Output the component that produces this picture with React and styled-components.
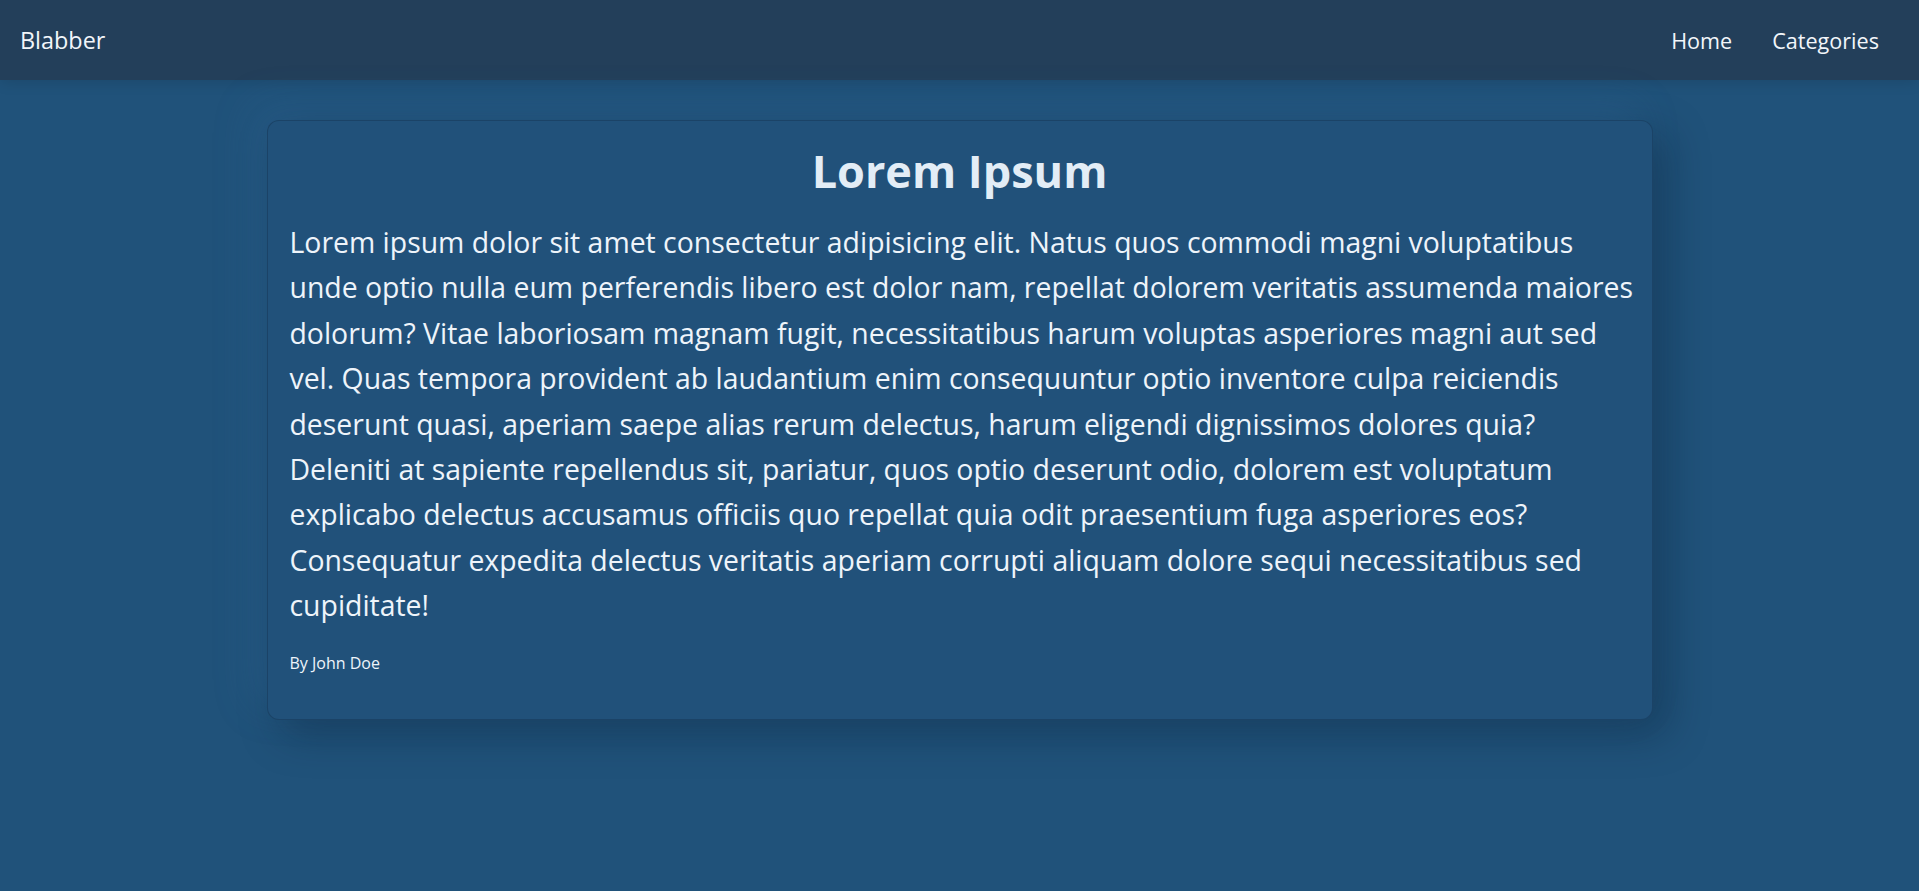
import styled, { createGlobalStyle } from "styled-components";

const GlobalStyle = createGlobalStyle`
  html, body {
    margin: 0;
    padding: 0;
    min-height: 100%;
  }
  body {
    background: #20527a;
    font-family: "Open Sans", "Noto Sans", sans-serif;
    color: #eef4fa;
  }
`;

const Page = styled.div`
  min-height: 891px;
  background: #20527a;
`;

const Nav = styled.nav`
  height: 80px;
  display: flex;
  align-items: center;
  justify-content: space-between;
  padding: 0 20px;
  background: #233f5a;
  box-shadow: 0 2px 14px rgba(0, 0, 0, 0.12);
  box-sizing: border-box;
`;

const Brand = styled.a`
  font-size: 23.4px;
  color: #f2f6fa;
  text-decoration: none;
`;

const Links = styled.div`
  display: flex;
  align-items: center;
`;

const NavItem = styled.a`
  font-size: 21.6px;
  color: #f2f6fa;
  text-decoration: none;
  padding: 0 20px;
`;

const Main = styled.main`
  padding-top: 40px;
  display: flex;
  justify-content: center;
`;

const Card = styled.article`
  width: 1386px;
  box-sizing: border-box;
  padding: 23px 8px 45px 22px;
  background: #21517a;
  border: 1px solid rgba(20, 50, 80, 0.45);
  border-radius: 12px;
  box-shadow: 14px 14px 40px rgba(10, 30, 50, 0.35),
    -14px -14px 40px rgba(60, 120, 170, 0.22);
`;

const Title = styled.h1`
  margin: 0 0 22px;
  padding-right: 14px;
  text-align: center;
  font-size: 45px;
  font-weight: 700;
  line-height: 1.2;
  color: #e3edf6;
`;

const Body = styled.p`
  margin: 0;
  font-size: 28.4px;
  line-height: 45.4px;
  color: #eef4fa;
`;

const Author = styled.p`
  margin: 23px 0 0;
  font-size: 16px;
  color: #eef4fa;
`;

export default function App() {
  return (
    <Page>
      <GlobalStyle />
      <Nav>
        <Brand href="#">Blabber</Brand>
        <Links>
          <NavItem href="#">Home</NavItem>
          <NavItem href="#">Categories</NavItem>
        </Links>
      </Nav>
      <Main>
        <Card>
          <Title>Lorem Ipsum</Title>
          <Body>
            Lorem ipsum dolor sit amet consectetur adipisicing elit. Natus quos
            commodi magni voluptatibus unde optio nulla eum perferendis libero
            est dolor nam, repellat dolorem veritatis assumenda maiores dolorum?
            Vitae laboriosam magnam fugit, necessitatibus harum voluptas
            asperiores magni aut sed vel. Quas tempora provident ab laudantium
            enim consequuntur optio inventore culpa reiciendis deserunt quasi,
            aperiam saepe alias rerum delectus, harum eligendi dignissimos
            dolores quia? Deleniti at sapiente repellendus sit, pariatur, quos
            optio deserunt odio, dolorem est voluptatum explicabo delectus
            accusamus officiis quo repellat quia odit praesentium fuga
            asperiores eos? Consequatur expedita delectus veritatis aperiam
            corrupti aliquam dolore sequi necessitatibus sed cupiditate!
          </Body>
          <Author>By John Doe</Author>
        </Card>
      </Main>
    </Page>
  );
}
